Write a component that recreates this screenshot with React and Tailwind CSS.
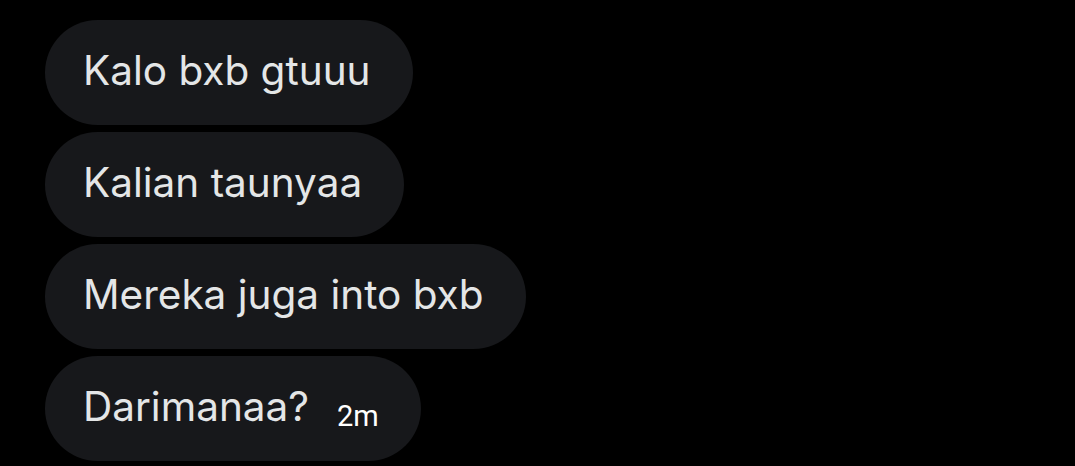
import React from "react";

const messages = ["Kalo bxb gtuuu", "Kalian taunyaa", "Mereka juga into bxb"];

function Bubble({ children }) {
  return (
    <div className="flex h-[105px] items-center rounded-full bg-[#17181b] pl-[38px] pr-[42px] text-[40.5px] font-normal leading-none text-[#e4e6e7]">
      {children}
    </div>
  );
}

export default function App() {
  return (
    <div className="h-[466px] w-[1075px] overflow-hidden bg-black pl-[45px] pt-[20px] font-['Inter',sans-serif]">
      <div className="flex flex-col items-start gap-[7px]">
        {messages.map((m) => (
          <Bubble key={m}>
            <span className="-translate-y-[1px]">{m}</span>
          </Bubble>
        ))}
        <Bubble>
          <span className="-translate-y-[1px]">Darimanaa?</span>
          <span className="ml-[28px] mt-[16px] font-['Roboto',sans-serif] text-[29px] font-normal text-white">2m</span>
        </Bubble>
      </div>
    </div>
  );
}
